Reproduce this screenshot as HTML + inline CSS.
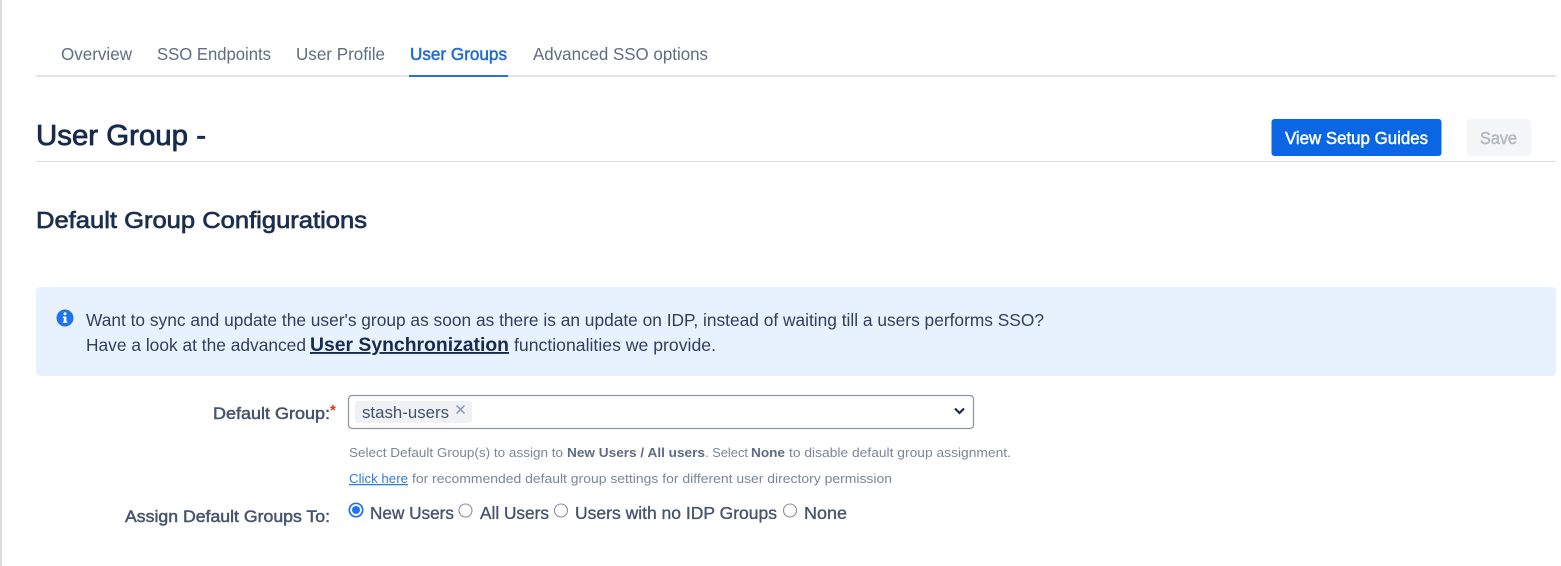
<!DOCTYPE html>
<html><head><meta charset="utf-8"><style>
html,body{margin:0;padding:0;background:#fff;width:1561px;height:566px;overflow:hidden}
svg{display:block;filter:blur(.35px)}
text{font-family:"Liberation Sans",sans-serif}
</style></head><body>
<svg width="1561" height="566" viewBox="0 0 1561 566" xmlns="http://www.w3.org/2000/svg">
<rect x="0" y="0" width="2" height="566" fill="#dcdcdc"/>
<!-- tabs -->
<rect x="36" y="75" width="1520" height="2" fill="#e3e5e9"/>
<rect x="409" y="75" width="99" height="2" fill="#2a6fdb"/>
<g font-size="17.5" fill="#5e6c84">
<text x="61" y="60" textLength="71" lengthAdjust="spacingAndGlyphs">Overview</text>
<text x="157" y="60" textLength="114" lengthAdjust="spacingAndGlyphs">SSO Endpoints</text>
<text x="296" y="60" textLength="89" lengthAdjust="spacingAndGlyphs">User Profile</text>
<text x="410" y="60" textLength="97" lengthAdjust="spacingAndGlyphs" fill="#1f6bd8" stroke="#1f6bd8" stroke-width=".5">User Groups</text>
<text x="533" y="60" textLength="175" lengthAdjust="spacingAndGlyphs">Advanced SSO options</text>
</g>
<!-- heading -->
<text x="36" y="145" font-size="29" fill="#172b4d" textLength="170" lengthAdjust="spacingAndGlyphs" stroke="#172b4d" stroke-width=".8">User Group -</text>
<rect x="36" y="161" width="1520" height="1" fill="#dcdee2"/>
<rect x="1271.500" y="119" width="170" height="37" rx="3" fill="#0b66e4"/>
<text x="1285" y="144" font-size="17.500" fill="#fff" stroke="#fff" stroke-width=".5" textLength="143" lengthAdjust="spacingAndGlyphs">View Setup Guides</text>
<rect x="1467" y="119" width="64" height="37" rx="3" fill="#f4f5f7"/>
<text x="1480" y="144" font-size="17.500" fill="#b3b8c2" stroke="#b3b8c2" stroke-width=".5" textLength="37" lengthAdjust="spacingAndGlyphs">Save</text>
<text x="36" y="228" font-size="23.500" fill="#1c2f50" stroke="#1c2f50" stroke-width=".7" textLength="331" lengthAdjust="spacingAndGlyphs">Default Group Configurations</text>
<!-- info banner -->
<rect x="36" y="287" width="1520" height="89" rx="4" fill="#e8f1fe"/>
<circle cx="65" cy="318" r="8.500" fill="#1f74ec"/>
<rect x="63.800" y="316.500" width="2.600" height="6" fill="#fff"/>
<rect x="62.800" y="316.500" width="3" height="1.300" fill="#fff"/>
<rect x="62.800" y="321.500" width="4.600" height="1.300" fill="#fff"/>
<circle cx="65" cy="313.800" r="1.500" fill="#fff"/>
<g font-size="17.500" fill="#2f3f5c">
<text x="86" y="326" textLength="958" lengthAdjust="spacingAndGlyphs">Want to sync and update the user's group as soon as there is an update on IDP, instead of waiting till a users performs SSO?</text>
<text x="86" y="351" textLength="220" lengthAdjust="spacingAndGlyphs">Have a look at the advanced</text>
<text x="310" y="351" textLength="199" lengthAdjust="spacingAndGlyphs" font-size="19" font-weight="bold" fill="#172b4d" text-decoration="underline">User Synchronization</text>
<text x="514" y="351" textLength="202" lengthAdjust="spacingAndGlyphs">functionalities we provide.</text>
</g>
<!-- default group -->
<text x="213" y="419" font-size="17" fill="#46546d" stroke="#46546d" stroke-width=".5" textLength="117" lengthAdjust="spacingAndGlyphs">Default Group:</text>
<text x="330" y="415" font-size="15" font-weight="bold" fill="#de350b">*</text>
<rect x="348.500" y="395.500" width="625" height="33" rx="3.500" fill="#fff" stroke="#8d95a3" stroke-width="1.200"/>
<rect x="355" y="401" width="117" height="22" rx="3" fill="#f0f1f4"/>
<text x="362" y="418" font-size="16.500" fill="#42526e" textLength="87" lengthAdjust="spacingAndGlyphs">stash-users</text>
<path d="M456.500 405.500l8 8M464.500 405.500l-8 8" stroke="#8a95a6" stroke-width="1.500" fill="none"/>
<path d="M955 408.500l4.500 4.500 4.500-4.500" stroke="#172b4d" stroke-width="2.200" fill="none"/>
<!-- help -->
<g font-size="12.800" fill="#7a869a">
<text x="349" y="457" textLength="214" lengthAdjust="spacingAndGlyphs">Select Default Group(s) to assign to</text>
<text x="567" y="457" textLength="138" lengthAdjust="spacingAndGlyphs" font-weight="bold" fill="#5e6c84">New Users / All users</text>
<text x="705" y="457" textLength="43" lengthAdjust="spacingAndGlyphs">. Select</text>
<text x="751" y="457" textLength="34" lengthAdjust="spacingAndGlyphs" font-weight="bold" fill="#5e6c84">None</text>
<text x="789" y="457" textLength="222" lengthAdjust="spacingAndGlyphs">to disable default group assignment.</text>
<text x="349" y="483" textLength="59" lengthAdjust="spacingAndGlyphs" fill="#2f7fd8" text-decoration="underline">Click here</text>
<text x="412" y="483" textLength="480" lengthAdjust="spacingAndGlyphs">for recommended default group settings for different user directory permission</text>
</g>
<!-- radios -->
<text x="125" y="522" font-size="17" fill="#46546d" stroke="#46546d" stroke-width=".5" textLength="205" lengthAdjust="spacingAndGlyphs">Assign Default Groups To:</text>
<circle cx="356" cy="510" r="6.700" fill="#fff" stroke="#1f74ec" stroke-width="1.700"/>
<circle cx="356" cy="510" r="4" fill="#1f74ec"/>
<circle cx="465.500" cy="510.500" r="6.500" fill="#fff" stroke="#8b8f96" stroke-width="1.100"/>
<circle cx="561" cy="510.500" r="6.500" fill="#fff" stroke="#8b8f96" stroke-width="1.100"/>
<circle cx="790" cy="510.500" r="6.500" fill="#fff" stroke="#8b8f96" stroke-width="1.100"/>
<g font-size="17.500" fill="#46546d" stroke="#46546d" stroke-width=".35">
<text x="370" y="519" textLength="84" lengthAdjust="spacingAndGlyphs">New Users</text>
<text x="480" y="519" textLength="69" lengthAdjust="spacingAndGlyphs">All Users</text>
<text x="575" y="519" textLength="202" lengthAdjust="spacingAndGlyphs">Users with no IDP Groups</text>
<text x="804" y="519" textLength="43" lengthAdjust="spacingAndGlyphs">None</text>
</g>
</svg>
</body></html>
